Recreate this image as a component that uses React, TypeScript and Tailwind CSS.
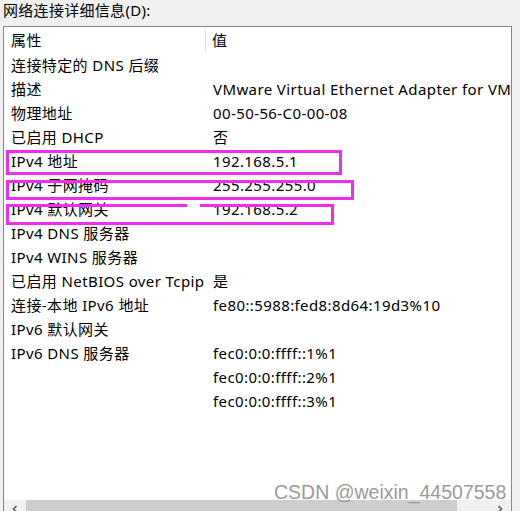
import React from 'react';

const rows: [string, string][] = [
  ['连接特定的 DNS 后缀', ''],
  ['描述', 'VMware Virtual Ethernet Adapter for VMnet8'],
  ['物理地址', '00-50-56-C0-00-08'],
  ['已启用 DHCP', '否'],
  ['IPv4 地址', '192.168.5.1'],
  ['IPv4 子网掩码', '255.255.255.0'],
  ['IPv4 默认网关', '192.168.5.2'],
  ['IPv4 DNS 服务器', ''],
  ['IPv4 WINS 服务器', ''],
  ['已启用 NetBIOS over Tcpip', '是'],
  ['连接-本地 IPv6 地址', 'fe80::5988:fed8:8d64:19d3%10'],
  ['IPv6 默认网关', ''],
  ['IPv6 DNS 服务器', 'fec0:0:0:ffff::1%1'],
  ['', 'fec0:0:0:ffff::2%1'],
  ['', 'fec0:0:0:ffff::3%1'],
];

const App = () => {
  return (
    <div
      className="relative w-[520px] h-[511px] overflow-hidden bg-[#f0f0f0] text-black text-[15px]"
      style={{ fontFamily: '"Noto Sans", "Noto Sans CJK SC", sans-serif' }}
    >
      {/* Title */}
      <div className="h-[26px] pl-[3px] leading-[20px] tracking-[0.3px]">网络连接详细信息(D):</div>

      {/* List box */}
      <div className="ml-[3px] w-[509px] h-[492px] border border-[#828790] bg-white flex flex-col overflow-hidden tracking-[0.4px]">
        <div className="flex h-[26px] items-center shrink-0">
          <div className="w-[202px] pl-[7px] h-[25px] flex items-center border-r border-[#e5e5e5]">属性</div>
          <div className="pl-[6px]">值</div>
        </div>
        {rows.map(([k, v], i) => (
          <div key={i} className="flex h-6 items-center shrink-0 whitespace-nowrap">
            <div className="w-[203px] pl-[7px] shrink-0">{k}</div>
            <div className="pl-[6px]">{v}</div>
          </div>
        ))}
        <div className="flex-1" />
        {/* Horizontal scrollbar */}
        <div className="h-[17px] shrink-0 flex items-stretch bg-[#f0f0f0]">
          <div className="w-[22px] flex items-center justify-center">
            <svg width="8" height="8" viewBox="0 0 8 8">
              <path d="M5.5 1 L2.5 4 L5.5 7" stroke="#606060" strokeWidth="1.6" fill="none" />
            </svg>
          </div>
          <div className="w-[431px] bg-[#cdcdcd]" />
          <div className="flex-1" />
          <div className="w-[22px] flex items-center justify-center">
            <svg width="8" height="8" viewBox="0 0 8 8">
              <path d="M2.5 1 L5.5 4 L2.5 7" stroke="#606060" strokeWidth="1.6" fill="none" />
            </svg>
          </div>
        </div>
      </div>

      {/* Annotation boxes */}
      <div className="absolute left-[6px] top-[150px] w-[336px] h-[25px] border-[3px] border-[#f02cf0]" />
      <div className="absolute left-[6px] top-[180px] w-[348px] h-[20px] border-[3px] border-[#f02cf0]" />
      <div className="absolute left-[6px] top-[204px] w-[328px] h-[21px] border-[3px] border-t-0 border-[#f02cf0]" />
      <div className="absolute left-[6px] top-[204px] w-[181px] h-[3px] bg-[#f02cf0]" />
      <div className="absolute left-[200px] top-[204px] w-[134px] h-[3px] bg-[#f02cf0]" />

      {/* Watermark */}
      <div
        className="absolute left-[274px] top-[480px] text-[19.5px] leading-[24px] text-[#9a9a9a]"
        style={{ fontFamily: '"Liberation Sans", Arial, sans-serif' }}
      >
        CSDN @weixin_44507558
      </div>
    </div>
  );
};

export default App;
